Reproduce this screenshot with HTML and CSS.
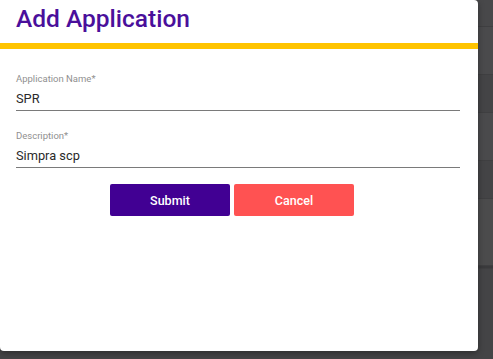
FILE: index.html
```html
<!DOCTYPE html>
<html lang="en">

<head>
  <meta charset="UTF-8" />
  <meta name="viewport" content="width=device-width, initial-scale=1.0" />
  <title>Add Application</title>
  <link rel="stylesheet" href="styles.css">
</head>

<body>
  <!-- page behind the modal -->
  <div class="backdrop">
    <div class="row row-head"></div>
    <div class="row row-a"></div>
    <div class="row row-b"></div>
    <div class="row row-a"></div>
    <div class="row row-b"></div>
    <div class="row row-tall"></div>
    <div class="row row-foot"></div>
  </div>

  <div class="dialog">
    <h2 class="dialog-title">Add Application</h2>
    <div class="dialog-bar"></div>
    <form class="dialog-form">
      <div class="field">
        <label class="field-label">Application Name*</label>
        <div class="field-input">SPR</div>
      </div>
      <div class="field">
        <label class="field-label">Description*</label>
        <div class="field-input">Simpra scp</div>
      </div>
      <div class="actions">
        <button type="button" class="btn btn-submit">Submit</button>
        <button type="button" class="btn btn-cancel">Cancel</button>
      </div>
    </form>
  </div>
</body>

</html>
```

FILE: styles.css
```css
* {
  box-sizing: border-box;
}

body {
  margin: 0;
  height: 100vh;
  overflow: hidden;
  background: #444446;
  font-family: Roboto, "Liberation Sans", sans-serif;
  position: relative;
}

.backdrop {
  display: flex;
  flex-direction: column;
}

.row {
  border-bottom: 1px solid #3f3f41;
}

.row-head {
  height: 27px;
  background: #48484a;
}

.row-a {
  height: 48px;
  background: #4a4a4c;
}

.row-b {
  height: 38px;
  background: #444446;
}

.row-tall {
  height: 67px;
  background: #4b4b4c;
}

.row-foot {
  height: 3px;
  background: #3a3a3c;
}

.dialog {
  position: absolute;
  top: 0;
  left: 0;
  width: 478px;
  height: 351px;
  background: #fff;
  border-radius: 0 4px 4px 4px;
  box-shadow: 0 2px 6px rgba(0, 0, 0, 0.35);
}

.dialog-title {
  margin: 0;
  padding: 4px 16px 0;
  height: 43px;
  font-size: 24.5px;
  font-weight: 500;
  color: #4a0f9b;
  line-height: 30px;
}

.dialog-bar {
  height: 6px;
  background: #ffc400;
}

.dialog-form {
  padding: 24px 18px 0 16px;
}

.field {
  margin-bottom: 19px;
}

.field-label {
  display: block;
  font-size: 9.5px;
  color: #909090;
  line-height: 12px;
}

.field-input {
  font-size: 12.8px;
  color: #2a2a2a;
  line-height: 18px;
  padding: 5px 0 2px;
  border-bottom: 1px solid #7a7a7a;
}

.actions {
  display: flex;
  justify-content: center;
  gap: 4px;
  margin-top: -3px;
  padding-right: 12px;
}

.btn {
  width: 120px;
  height: 32px;
  border: none;
  border-radius: 2px;
  color: #fff;
  font-family: Roboto, "Liberation Sans", sans-serif;
  font-size: 12.5px;
  font-weight: 500;
  cursor: pointer;
}

.btn-submit {
  background: #410093;
}

.btn-cancel {
  background: #ff5252;
}
```
